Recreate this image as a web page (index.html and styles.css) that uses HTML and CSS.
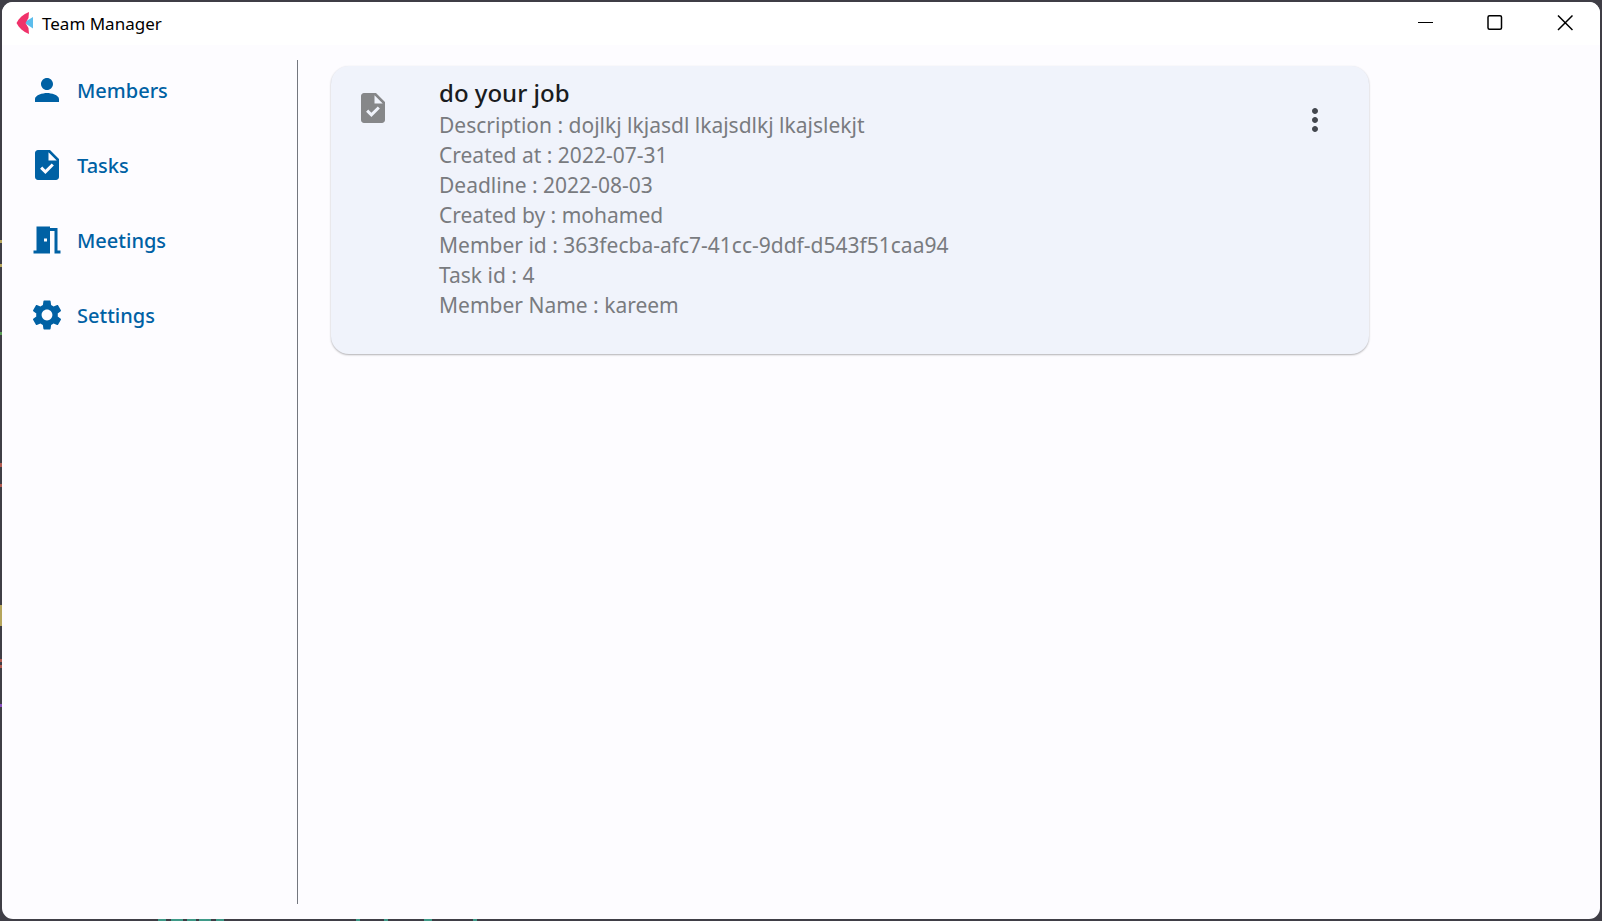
FILE: index.html
```html
<!DOCTYPE html>
<html lang="en">
<head>
<meta charset="utf-8">
<title>Team Manager</title>
<link rel="stylesheet" href="styles.css">
</head>
<body>
<div class="window">
  <header class="titlebar">
    <svg class="app-logo" viewBox="0 0 18 22" aria-hidden="true">
      <path fill="#5cbdec" d="M17 5v11.500L8 10.500z"/>
      <path fill="#f0326a" d="M13 0C7 2.500 3 6 .5 11 3 16 7 19.500 13 22L12.500 16 9.500 11l3-5z"/>
    </svg>
    <h1 class="app-title">Team Manager</h1>
    <div class="window-controls">
      <button class="window-button" type="button" aria-label="Minimize"><svg viewBox="0 0 16 16"><path class="thin" d="M1 7.500h15"/></svg></button>
      <button class="window-button" type="button" aria-label="Maximize"><svg viewBox="0 0 16 16"><rect x="1" y=".75" width="13.500" height="13.500" rx="1.500"/></svg></button>
      <button class="window-button" type="button" aria-label="Close"><svg viewBox="0 0 16 16"><path d="M1 .5l14.500 14.500M15.500 .5L1 15"/></svg></button>
    </div>
  </header>
  <div class="content">
    <nav class="sidebar" aria-label="Main">
      <button class="nav-item" type="button"><svg class="icon" viewBox="0 0 24 24"><path d="M12 12c2.210 0 4-1.790 4-4s-1.790-4-4-4-4 1.790-4 4 1.790 4 4 4zm0 2c-2.670 0-8 1.340-8 4v2h16v-2c0-2.660-5.330-4-8-4z"/></svg>Members</button>
      <button class="nav-item" type="button"><svg class="icon" viewBox="0 0 24 24"><path d="M14 2H6c-1.100 0-1.990.9-1.990 2L4 20c0 1.100.89 2 1.990 2H18c1.100 0 2-.9 2-2V8l-6-6zm-3.060 16L7.400 14.460l1.410-1.410 2.120 2.120 4.240-4.240 1.410 1.410L10.940 18zM13 9V3.500L18.500 9H13z"/></svg>Tasks</button>
      <button class="nav-item" type="button"><svg class="icon" viewBox="0 0 24 24"><path d="M14 6v15H3v-2h2V3h9v1h5v15h2v2h-4V6h-3zm-4 5v2h2v-2h-2z"/></svg>Meetings</button>
      <button class="nav-item" type="button"><svg class="icon" viewBox="0 0 24 24"><path d="M19.140 12.940c.04-.3.060-.61.060-.94 0-.32-.02-.64-.07-.94l2.030-1.580c.18-.14.230-.41.120-.61l-1.920-3.320c-.12-.22-.37-.29-.59-.22l-2.390.96c-.5-.38-1.030-.7-1.620-.94l-.36-2.540c-.04-.24-.24-.41-.48-.41h-3.840c-.24 0-.43.170-.47.410l-.36 2.540c-.59.240-1.130.570-1.620.940l-2.390-.96c-.22-.08-.47 0-.59.220L2.740 8.870c-.12.210-.08.470.120.610l2.030 1.580c-.05.300-.09.630-.09.940s.02.640.070.940l-2.030 1.580c-.18.140-.23.410-.12.610l1.920 3.320c.12.220.37.290.59.220l2.390-.96c.5.380 1.030.700 1.620.940l.36 2.540c.05.240.24.410.48.410h3.840c.24 0 .44-.17.470-.41l.36-2.540c.59-.24 1.130-.56 1.620-.94l2.390.96c.22.080.47 0 .59-.22l1.920-3.320c.12-.22.070-.47-.12-.61l-2.010-1.580zM12 15.600c-1.980 0-3.600-1.620-3.600-3.600s1.620-3.600 3.600-3.600 3.600 1.620 3.600 3.600-1.620 3.600-3.600 3.600z"/></svg>Settings</button>
    </nav>
    <main class="main">
      <article class="card">
        <svg class="icon card-icon" viewBox="0 0 24 24" aria-hidden="true"><path d="M14 2H6c-1.100 0-1.990.9-1.990 2L4 20c0 1.100.89 2 1.990 2H18c1.100 0 2-.9 2-2V8l-6-6zm-3.060 16L7.400 14.460l1.410-1.410 2.120 2.120 4.240-4.240 1.410 1.410L10.940 18zM13 9V3.500L18.500 9H13z"/></svg>
        <div class="card-body">
          <h2 class="card-title">do your job</h2>
          <ul class="details">
            <li>Description : dojlkj lkjasdl lkajsdlkj lkajslekjt</li>
            <li>Created at : 2022-07-31</li>
            <li>Deadline : 2022-08-03</li>
            <li>Created by : mohamed</li>
            <li>Member id : 363fecba-afc7-41cc-9ddf-d543f51caa94</li>
            <li>Task id : 4</li>
            <li>Member Name : kareem</li>
          </ul>
        </div>
        <button class="menu-button" type="button" aria-label="Task options"><svg class="icon" viewBox="0 0 24 24"><path d="M12 8c1.100 0 2-.9 2-2s-.9-2-2-2-2 .9-2 2 .9 2 2 2zm0 2c-1.100 0-2 .9-2 2s.9 2 2 2 2-.9 2-2-.9-2-2-2zm0 6c-1.100 0-2 .9-2 2s.9 2 2 2 2-.9 2-2-.9-2-2-2z"/></svg></button>
      </article>
    </main>
  </div>
</div>
</body>
</html>
```
FILE: styles.css
```css
* { box-sizing: border-box; }

/* The desktop behind the window shows as a thin edge with specks of colour. */
body {
  margin: 0;
  min-height: 100vh;
  padding: 2px;
  display: flex;
  font-family: "Noto Sans", "Open Sans", sans-serif;
  background:
    linear-gradient(#b5a55c, #b5a55c) 0 240px / 2px 3px no-repeat,
    linear-gradient(#b5a55c, #b5a55c) 0 264px / 2px 3px no-repeat,
    linear-gradient(#5a9c55, #5a9c55) 0 332px / 2px 3px no-repeat,
    linear-gradient(#b05a50, #b05a50) 0 463px / 2px 4px no-repeat,
    linear-gradient(#b05a50, #b05a50) 0 484px / 2px 3px no-repeat,
    linear-gradient(#b5a55c, #b5a55c) 0 605px / 2px 21px no-repeat,
    linear-gradient(#b05a50, #b05a50) 0 659px / 2px 3px no-repeat,
    linear-gradient(#b05a50, #b05a50) 0 665px / 2px 3px no-repeat,
    linear-gradient(#8a4fc0, #8a4fc0) 0 704px / 2px 3px no-repeat,
    linear-gradient(#3f9a88, #3f9a88) 158px 100% / 8px 2px no-repeat,
    linear-gradient(#3f9a88, #3f9a88) 171px 100% / 12px 2px no-repeat,
    linear-gradient(#3f9a88, #3f9a88) 187px 100% / 9px 2px no-repeat,
    linear-gradient(#3f9a88, #3f9a88) 199px 100% / 12px 2px no-repeat,
    linear-gradient(#3f9a88, #3f9a88) 216px 100% / 8px 2px no-repeat,
    linear-gradient(#3f9a88, #3f9a88) 356px 100% / 4px 2px no-repeat,
    linear-gradient(#3f9a88, #3f9a88) 384px 100% / 4px 2px no-repeat,
    linear-gradient(#3f9a88, #3f9a88) 424px 100% / 8px 2px no-repeat,
    linear-gradient(#3f9a88, #3f9a88) 473px 100% / 4px 2px no-repeat,
    #3f3e46;
}

button {
  border: 0;
  padding: 0;
  background: none;
  color: inherit;
  font: inherit;
}

.window {
  flex: 1;
  display: flex;
  flex-direction: column;
  overflow: hidden;
  border-radius: 11px;
  background: #fdfcff;
}

.titlebar {
  display: flex;
  align-items: center;
  height: 43px;
  padding: 0 0 2px 14px;
  background: #fff;
}

.app-logo { width: 18px; height: 22px; }

.app-title {
  flex: 1;
  margin: 2px 0 0 8px;
  font-size: 17px;
  font-weight: 400;
  color: #000;
}

.window-controls { display: flex; height: 100%; }

.window-button {
  display: grid;
  place-items: center;
  width: 70px;
}

.window-button svg {
  width: 16px;
  height: 16px;
  fill: none;
  stroke: #000;
  stroke-width: 1.500;
}

.window-button .thin { stroke-width: 1; }

.content {
  flex: 1;
  display: flex;
  padding: 15px 0;
}

.sidebar {
  display: flex;
  flex-direction: column;
  gap: 15px;
  width: 296px;
  padding-left: 27px;
  border-right: 1px solid #74777f;
}

.nav-item {
  display: flex;
  align-items: center;
  gap: 12px;
  height: 60px;
  font-size: 20px;
  font-weight: 500;
  color: #0061a4;
}

.icon {
  display: block;
  flex: none;
  width: 36px;
  height: 36px;
  fill: currentColor;
}

.main {
  flex: 1;
  padding: 6px 33px;
}

.card {
  display: flex;
  align-items: flex-start;
  max-width: 1038px;
  padding: 9px 36px 34px 24px;
  border-radius: 18px;
  background: #f0f3fb;
  box-shadow: 0 1px 2px rgba(0, 0, 0, 0.300);
}

.card-icon {
  margin-top: 15px;
  color: #868789;
}

.card-body { flex: 1; margin-left: 48px; }

.card-title {
  margin: 0;
  font-size: 24px;
  font-weight: 500;
  line-height: 35px;
  color: #1a1c1e;
}

.details {
  margin: 0;
  padding: 0;
  list-style: none;
  font-size: 21px;
  line-height: 30px;
  color: #797b7f;
}

.menu-button { margin-top: 27px; color: #43474e; }
```
